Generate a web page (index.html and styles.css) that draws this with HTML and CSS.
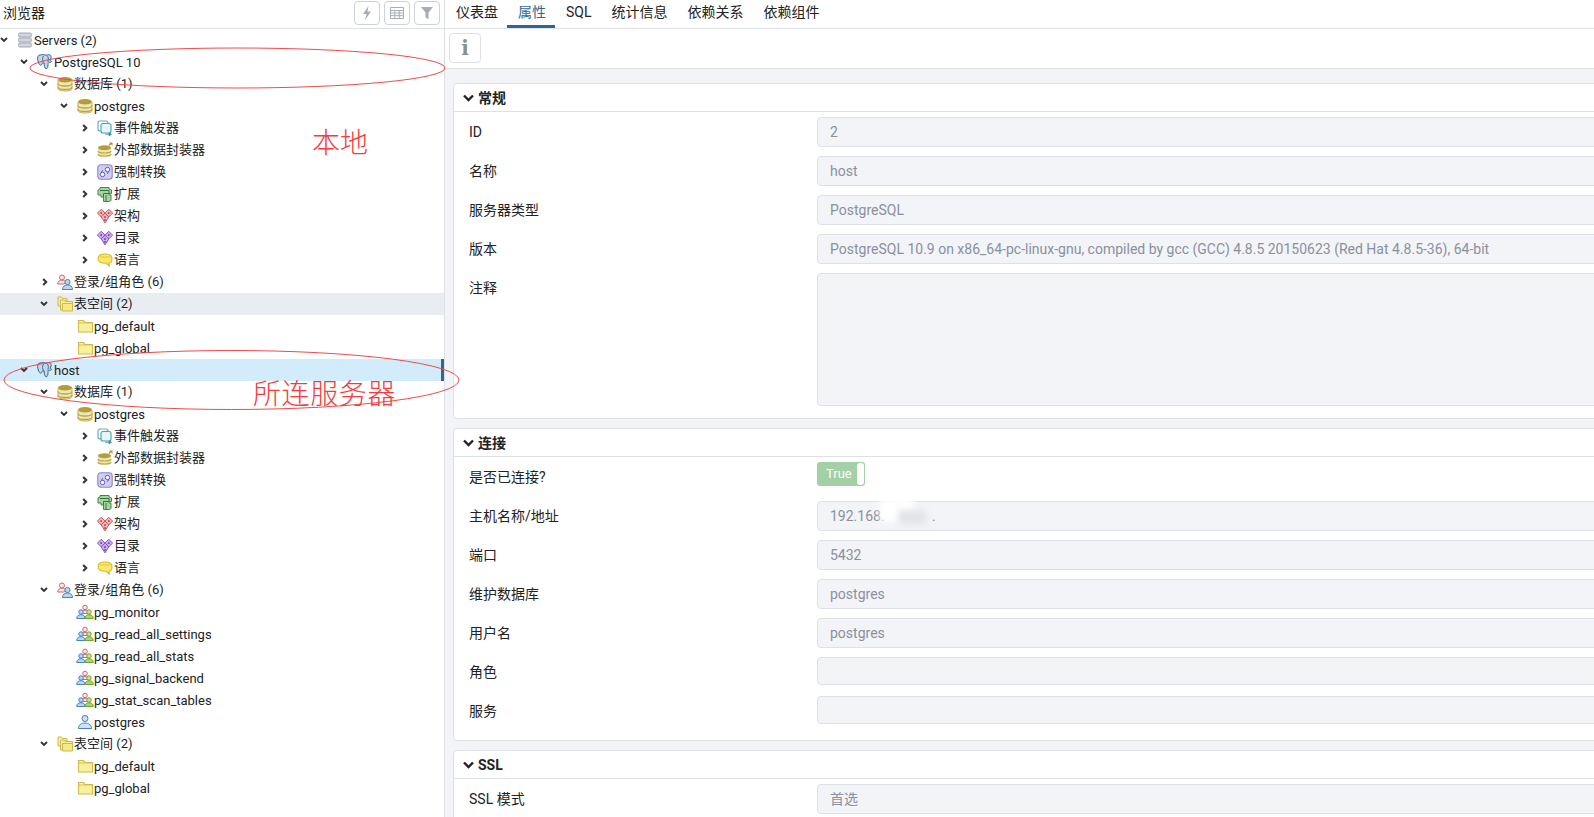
FILE: index.html
```html
<!DOCTYPE html>
<html lang="zh-CN">
<head>
<meta charset="UTF-8" />
<title>pgAdmin</title>
<link rel="stylesheet" href="styles.css">
</head>
<body>
<svg class="sprite" width="0" height="0" aria-hidden="true">
  <symbol id="down" viewBox="0 0 8 6"><path d="M1 1l3 3 3-3" fill="none" stroke="#333" stroke-width="1.900"/></symbol>
  <symbol id="right" viewBox="0 0 6 8"><path d="M1.200 1l3 3-3 3" fill="none" stroke="#333" stroke-width="2"/></symbol>
  <symbol id="fold" viewBox="0 0 11 8"><path d="M1 1.500l4.500 4.500 4.500-4.500" fill="none" stroke="#222" stroke-width="2.400"/></symbol>
  <symbol id="servers" viewBox="0 0 16 16">
    <g fill="#d3d6dc" stroke="#a3a8b2"><rect x="1.500" y="1" width="13" height="4" rx="1.500"/><rect x="1.500" y="6" width="13" height="4" rx="1.500"/><rect x="1.500" y="11" width="13" height="4" rx="1.500"/></g>
  </symbol>
  <symbol id="pg" viewBox="0 0 16 16">
    <path d="M3 1C.8 1 .2 3.800.8 6.200c.5 2.200 1.400 4.800 2.800 5 1.100.1 1.400-1.500 1.900-2.400.9.300 1.300.4 1.700.1-.1 2 .3 5.600 1.900 5.800 1.600.2 1.800-1.900 1.900-4.200.1-1.300.1-2 .5-2.400 1.300.5 2.700.3 3.100-.6.300-.6-.9-.6-1.500-1.100 1.100-1.700 1.400-4 .5-5C13 .4 10.700.5 9.400 1.300 7.800.6 5 .4 3 1z" fill="#c4d8ea" stroke="#336791"/>
    <path d="M6.500 2C5 4.200 5.500 7 6.500 8.500M9.600 1.500c2 1 2.100 3.800 1.300 6.200" fill="none" stroke="#336791" stroke-width=".9"/>
  </symbol>
  <symbol id="db" viewBox="0 0 16 16">
    <path d="M1 4v8.500C1 14 4 15 8 15s7-1 7-2.500V4z" fill="#efe7b0"/>
    <path d="M1 7.500C1 9 4 10 8 10s7-1 7-2.500M1 11c0 1.500 3 2.500 7 2.500s7-1 7-2.500" fill="none" stroke="#b9a44a" stroke-width="1.300"/>
    <path d="M1 4v8.500C1 14 4 15 8 15s7-1 7-2.500V4" fill="none" stroke="#c5b35c"/>
    <ellipse cx="8" cy="3.800" rx="7" ry="2.800" fill="#b49c3c"/>
  </symbol>
  <symbol id="trigger" viewBox="0 0 16 16">
    <rect x="1" y="1" width="10" height="10" rx="2" fill="#fff" stroke="#5ba9b8" stroke-width="1.100"/>
    <rect x="4" y="3.500" width="10" height="9.500" rx="2" fill="#e8f5f7" stroke="#4a9fb0" stroke-width="1.100"/>
    <path d="M8 14.300h5M12 12.800l2.500 1.500-2.500 1.500z" fill="#2f8ca0" stroke="#2f8ca0" stroke-width=".7"/>
  </symbol>
  <symbol id="fdw" viewBox="0 0 16 16">
    <path d="M1 6v7c0 1.200 3 2 6.500 2s6.500-.8 6.500-2V6z" fill="#efe7b0"/>
    <path d="M1 9c0 1.200 3 2 6.500 2S14 10.200 14 9M1 12c0 1.200 3 2 6.500 2s6.500-.8 6.500-2" fill="none" stroke="#b9a44a" stroke-width="1.200"/>
    <ellipse cx="7.500" cy="5.800" rx="6.500" ry="2.500" fill="#b49c3c"/>
    <path d="M12 3.500l2.500-2.500M12.500 1h2.500v2.500" fill="none" stroke="#a88f38" stroke-width="1.100"/>
  </symbol>
  <symbol id="cast" viewBox="0 0 16 16">
    <rect x=".8" y=".8" width="14.400" height="14.400" rx="3" fill="#cfcdf3" stroke="#8a87cf" stroke-width="1.100"/>
    <circle cx="10.500" cy="5.500" r="2.200" fill="#fff" stroke="#4d4aa5" stroke-width=".9"/>
    <circle cx="5.500" cy="10.500" r="2.200" fill="#fff" stroke="#4d4aa5" stroke-width=".9"/>
    <path d="M6 6.500c-1 .5-1.500 1-1.500 2M10 9.500c1-.5 1.500-1 1.500-2" fill="none" stroke="#4d4aa5"/>
  </symbol>
  <symbol id="ext" viewBox="0 0 16 16">
    <path d="M1 4l2-1V1.500h9V3l2.500 1v3.500H12V9h2v5.500l-2 1H6.500V11H4V9H1z" fill="#a9d3a5" stroke="#3f8a45"/>
    <path d="M3 4.500h9v3H6.500V11M9 9v6" fill="none" stroke="#2f7a38"/>
  </symbol>
  <symbol id="schema" viewBox="0 0 16 16">
    <g fill="#f0b8b8" stroke="#c4484f" stroke-width=".9"><path d="M4.200 1.300L8 5.100 4.200 8.900.4 5.100z"/><path d="M11.800 1.300l3.800 3.800-3.800 3.800L8 5.100z"/><path d="M8 5.100l3.800 3.800-3.800 6-3.800-6z"/></g>
    <g fill="#b8343c"><rect x="3.400" y="4.300" width="1.600" height="1.600"/><rect x="11" y="4.300" width="1.600" height="1.600"/><rect x="7.200" y="8.300" width="1.600" height="1.600"/><rect x="7.200" y="11.200" width="1.600" height="1.600"/></g>
  </symbol>
  <symbol id="catalog" viewBox="0 0 16 16">
    <g fill="#c9aef0" stroke="#7a47c0" stroke-width=".9"><path d="M4.200 1.300L8 5.100 4.200 8.900.4 5.100z"/><path d="M11.800 1.300l3.800 3.800-3.800 3.800L8 5.100z"/><path d="M8 5.100l3.800 3.800-3.800 6-3.800-6z"/></g>
    <g fill="#6a38b0"><rect x="3.400" y="4.300" width="1.600" height="1.600"/><rect x="11" y="4.300" width="1.600" height="1.600"/><rect x="7.200" y="8.300" width="1.600" height="1.600"/><rect x="7.200" y="11.200" width="1.600" height="1.600"/></g>
  </symbol>
  <symbol id="lang" viewBox="0 0 16 16">
    <path d="M8 2c4 0 7 1.300 7 4.500S13.500 11 12 11.200l.3 2.800-3.300-2.700C4 11.500 1 10 1 6.500S4 2 8 2z" fill="#fbe96a" stroke="#d9b92c" stroke-width="1.100"/>
    <path d="M3 5h10" stroke="#e3c53c"/>
  </symbol>
  <symbol id="login" viewBox="0 0 16 16">
    <circle cx="5" cy="3.500" r="2.500" fill="#fbe4e4" stroke="#d0686c"/><path d="M.7 10c0-2.500 1.800-3.800 4.300-3.800 2 0 3.500.8 4 2.300L7 10z" fill="#fbe4e4" stroke="#d0686c"/>
    <circle cx="10.500" cy="8" r="2.600" fill="#bcd6f0" stroke="#4a80bf"/><path d="M5.500 15.500c0-3 2-4.500 5-4.500s5 1.500 5 4.500z" fill="#bcd6f0" stroke="#4a80bf"/>
  </symbol>
  <symbol id="ts" viewBox="0 0 16 16">
    <path d="M1 1h3.500l1 1.500H10V5H5v5H1z" fill="#f8f0a0" stroke="#cdb84c"/>
    <path d="M3.500 4h3.500l1 1.500h7.500V14H3.500z" fill="#f8f0a0" stroke="#cdb84c"/>
    <path d="M5.500 7.500h10V15h-10z" fill="#f5ea88" stroke="#cdb84c"/>
  </symbol>
  <symbol id="folder" viewBox="0 0 16 16">
    <path d="M1.500 2.500h5l1.500 2h7.500v9.500H1.500z" fill="#f8f09a" stroke="#cfba50" stroke-width="1.100"/>
    <path d="M1.500 5h14" stroke="#cfba50" stroke-width=".8"/>
  </symbol>
  <symbol id="group" viewBox="0 0 18 16">
    <circle cx="9" cy="3.500" r="2.300" fill="#fbe4e4" stroke="#d0686c"/><path d="M5.500 9.500c0-2 1.500-3.200 3.500-3.200s3.500 1.200 3.500 3.200z" fill="#fbe4e4" stroke="#d0686c"/>
    <circle cx="5" cy="8" r="2.200" fill="#bcd6f0" stroke="#4a80bf"/><path d="M.7 14.500c0-2.500 1.800-3.800 4.300-3.800s4 1.300 4 3.800z" fill="#bcd6f0" stroke="#4a80bf"/>
    <circle cx="13" cy="8" r="2.200" fill="#c9e59a" stroke="#6ea62e"/><path d="M9 14.500c0-2.500 1.500-3.800 4-3.800s4.300 1.300 4.300 3.800z" fill="#a9d668" stroke="#6ea62e"/>
  </symbol>
  <symbol id="user" viewBox="0 0 16 16">
    <circle cx="8" cy="4.500" r="3" fill="#cfe2f5" stroke="#4a80bf"/><path d="M1.500 14.500c0-3.500 2.500-5.500 6.500-5.500s6.500 2 6.500 5.500z" fill="#cfe2f5" stroke="#4a80bf"/>
  </symbol>
</svg>

<div class="app">
  <aside class="browser">
    <header class="browser-head">
      <span class="browser-title">浏览器</span>
      <div class="tools">
        <button class="tool"><svg width="12" height="16" viewBox="0 0 12 16"><path d="M7.500 1L2 9h3.500L4 15l6-8.500H6.500z" fill="#a7adb8"/></svg></button>
        <button class="tool"><svg width="14" height="12" viewBox="0 0 14 12"><path d="M.5.500h13v11H.5zM.5 3.500h13M.5 6h13M.5 8.700h13M4.800 3.500v8M9.200 3.500v8" fill="none" stroke="#a7adb8"/></svg></button>
        <button class="tool"><svg width="14" height="14" viewBox="0 0 14 14"><path d="M1 1h12L8.500 6.500V13l-3-1.500v-5z" fill="#a7adb8"/></svg></button>
      </div>
    </header>
    <ul class="tree">
      <li class="node l0"><svg class="tog"><use href="#down"/></svg><svg class="ico"><use href="#servers"/></svg><span class="lat">Servers (2)</span></li>
      <li class="node l1"><svg class="tog"><use href="#down"/></svg><svg class="ico"><use href="#pg"/></svg><span class="lat">PostgreSQL 10</span></li>
      <li class="node l2"><svg class="tog"><use href="#down"/></svg><svg class="ico"><use href="#db"/></svg>数据库 (1)</li>
      <li class="node l3"><svg class="tog"><use href="#down"/></svg><svg class="ico"><use href="#db"/></svg><span class="lat">postgres</span></li>
      <li class="node l4"><svg class="tog shut"><use href="#right"/></svg><svg class="ico"><use href="#trigger"/></svg>事件触发器</li>
      <li class="node l4"><svg class="tog shut"><use href="#right"/></svg><svg class="ico"><use href="#fdw"/></svg>外部数据封装器</li>
      <li class="node l4"><svg class="tog shut"><use href="#right"/></svg><svg class="ico"><use href="#cast"/></svg>强制转换</li>
      <li class="node l4"><svg class="tog shut"><use href="#right"/></svg><svg class="ico"><use href="#ext"/></svg>扩展</li>
      <li class="node l4"><svg class="tog shut"><use href="#right"/></svg><svg class="ico"><use href="#schema"/></svg>架构</li>
      <li class="node l4"><svg class="tog shut"><use href="#right"/></svg><svg class="ico"><use href="#catalog"/></svg>目录</li>
      <li class="node l4"><svg class="tog shut"><use href="#right"/></svg><svg class="ico"><use href="#lang"/></svg>语言</li>
      <li class="node l2"><svg class="tog shut"><use href="#right"/></svg><svg class="ico"><use href="#login"/></svg>登录/组角色 (6)</li>
      <li class="node l2 hover"><svg class="tog"><use href="#down"/></svg><svg class="ico"><use href="#ts"/></svg>表空间 (2)</li>
      <li class="node l3"><span class="tog"></span><svg class="ico"><use href="#folder"/></svg><span class="lat">pg_default</span></li>
      <li class="node l3"><span class="tog"></span><svg class="ico"><use href="#folder"/></svg><span class="lat">pg_global</span></li>
      <li class="node l1 selected"><svg class="tog"><use href="#down"/></svg><svg class="ico"><use href="#pg"/></svg><span class="lat">host</span></li>
      <li class="node l2"><svg class="tog"><use href="#down"/></svg><svg class="ico"><use href="#db"/></svg>数据库 (1)</li>
      <li class="node l3"><svg class="tog"><use href="#down"/></svg><svg class="ico"><use href="#db"/></svg><span class="lat">postgres</span></li>
      <li class="node l4"><svg class="tog shut"><use href="#right"/></svg><svg class="ico"><use href="#trigger"/></svg>事件触发器</li>
      <li class="node l4"><svg class="tog shut"><use href="#right"/></svg><svg class="ico"><use href="#fdw"/></svg>外部数据封装器</li>
      <li class="node l4"><svg class="tog shut"><use href="#right"/></svg><svg class="ico"><use href="#cast"/></svg>强制转换</li>
      <li class="node l4"><svg class="tog shut"><use href="#right"/></svg><svg class="ico"><use href="#ext"/></svg>扩展</li>
      <li class="node l4"><svg class="tog shut"><use href="#right"/></svg><svg class="ico"><use href="#schema"/></svg>架构</li>
      <li class="node l4"><svg class="tog shut"><use href="#right"/></svg><svg class="ico"><use href="#catalog"/></svg>目录</li>
      <li class="node l4"><svg class="tog shut"><use href="#right"/></svg><svg class="ico"><use href="#lang"/></svg>语言</li>
      <li class="node l2"><svg class="tog"><use href="#down"/></svg><svg class="ico"><use href="#login"/></svg>登录/组角色 (6)</li>
      <li class="node l3"><span class="tog"></span><svg class="ico wide"><use href="#group"/></svg><span class="lat">pg_monitor</span></li>
      <li class="node l3"><span class="tog"></span><svg class="ico wide"><use href="#group"/></svg><span class="lat">pg_read_all_settings</span></li>
      <li class="node l3"><span class="tog"></span><svg class="ico wide"><use href="#group"/></svg><span class="lat">pg_read_all_stats</span></li>
      <li class="node l3"><span class="tog"></span><svg class="ico wide"><use href="#group"/></svg><span class="lat">pg_signal_backend</span></li>
      <li class="node l3"><span class="tog"></span><svg class="ico wide"><use href="#group"/></svg><span class="lat">pg_stat_scan_tables</span></li>
      <li class="node l3"><span class="tog"></span><svg class="ico"><use href="#user"/></svg><span class="lat">postgres</span></li>
      <li class="node l2"><svg class="tog"><use href="#down"/></svg><svg class="ico"><use href="#ts"/></svg>表空间 (2)</li>
      <li class="node l3"><span class="tog"></span><svg class="ico"><use href="#folder"/></svg><span class="lat">pg_default</span></li>
      <li class="node l3"><span class="tog"></span><svg class="ico"><use href="#folder"/></svg><span class="lat">pg_global</span></li>
    </ul>
  </aside>

  <main class="main">
    <nav class="tabs">
      <a class="tab">仪表盘</a>
      <a class="tab active">属性</a>
      <a class="tab">SQL</a>
      <a class="tab">统计信息</a>
      <a class="tab">依赖关系</a>
      <a class="tab">依赖组件</a>
    </nav>
    <div class="toolbar"><button class="info">i</button></div>
    <div class="content">
      <section class="card">
        <h3 class="card-head"><svg class="fold"><use href="#fold"/></svg>常规</h3>
        <div class="card-body">
          <div class="field"><label>ID</label><div class="value">2</div></div>
          <div class="field"><label>名称</label><div class="value">host</div></div>
          <div class="field"><label>服务器类型</label><div class="value">PostgreSQL</div></div>
          <div class="field"><label>版本</label><div class="value">PostgreSQL 10.9 on x86_64-pc-linux-gnu, compiled by gcc (GCC) 4.8.5 20150623 (Red Hat 4.8.5-36), 64-bit</div></div>
          <div class="field"><label>注释</label><div class="value memo"></div></div>
        </div>
      </section>
      <section class="card">
        <h3 class="card-head"><svg class="fold"><use href="#fold"/></svg>连接</h3>
        <div class="card-body long">
          <div class="field"><label>是否已连接?</label><div class="switch"><span class="switch-text">True</span><span class="switch-knob"></span></div></div>
          <div class="field"><label>主机名称/地址</label><div class="value">192.168.<span class="smudge"></span><span class="smudge-grey"></span><span class="smudge-dot">.</span></div></div>
          <div class="field"><label>端口</label><div class="value">5432</div></div>
          <div class="field"><label>维护数据库</label><div class="value">postgres</div></div>
          <div class="field"><label>用户名</label><div class="value">postgres</div></div>
          <div class="field"><label>角色</label><div class="value empty"></div></div>
          <div class="field"><label>服务</label><div class="value empty"></div></div>
        </div>
      </section>
      <section class="card">
        <h3 class="card-head"><svg class="fold"><use href="#fold"/></svg>SSL</h3>
        <div class="card-body">
          <div class="field"><label>SSL 模式</label><div class="value">首选</div></div>
        </div>
      </section>
    </div>
  </main>
</div>

<!-- red notes drawn on top of the screenshot -->
<svg class="marks" width="1594" height="817">
  <ellipse cx="237.500" cy="68" rx="207.500" ry="20"/>
  <ellipse cx="231.500" cy="380" rx="227.500" ry="29.500"/>
</svg>
<div class="note note-local">本地</div>
<div class="note note-remote">所连服务器</div>
</body>
</html>
```

FILE: styles.css
```css
* { box-sizing: border-box; }
html, body {
  margin: 0;
  height: 100%;
  overflow: hidden;
}
body {
  font-family: Roboto, "Noto Sans CJK SC", sans-serif;
  font-size: 13px;
  color: #222;
  background: #fff;
}
.sprite { position: absolute; }
.app {
  display: flex;
  height: 817px;
}

/* browser tree */
.browser {
  width: 445px;
  flex: none;
  border-right: 1px solid #dde0e6;
}
.browser-head {
  height: 29px;
  display: flex;
  align-items: center;
  justify-content: space-between;
  padding: 0 3px 3px 3px;
  border-bottom: 1px solid #dde0e6;
  font-size: 14px;
  line-height: 20px;
}
.tools {
  display: flex;
  gap: 4px;
  margin-right: 1px;
}
.tool {
  width: 26px;
  height: 24px;
  padding: 0;
  display: flex;
  align-items: center;
  justify-content: center;
  background: #fff;
  border: 1px solid #ccd1da;
  border-radius: 4px;
}
.tree {
  list-style: none;
  margin: 0;
  padding: 0;
}
.node {
  height: 22px;
  display: flex;
  align-items: center;
  line-height: 22px;
  white-space: nowrap;
}
/* latin labels sit a pixel lower than the CJK ones */
.lat { margin-top: 2px; }
.l1 { padding-left: 20px; }
.l2 { padding-left: 40px; }
.l3 { padding-left: 60px; }
.l4 { padding-left: 80px; }
.hover { background: #e9ecf1; }
.selected {
  background: #d2ecfb;
  border-right: 3px solid #326690;
}
.tog {
  width: 8px;
  height: 6px;
  margin-right: 8px;
  flex: none;
}
.tog.shut {
  width: 6px;
  height: 8px;
  margin-left: 2px;
}
.ico {
  width: 16px;
  height: 16px;
  margin: 0 1px;
  flex: none;
}
.ico.wide {
  width: 18px;
  margin: 0;
}

/* right side */
.main {
  flex: 1;
  min-width: 0;
  display: flex;
  flex-direction: column;
}
.tabs {
  height: 29px;
  flex: none;
  display: flex;
  border-bottom: 1px solid #dde0e6;
}
.tab {
  height: 28px;
  padding: 0 9px 0 11px;
  font-size: 14px;
  line-height: 24px;
}
.tab.active {
  color: #326690;
  border-bottom: 3px solid #326690;
}
.toolbar {
  height: 40px;
  flex: none;
  padding: 4px;
  border-bottom: 1px solid #dde0e6;
}
.info {
  width: 32px;
  height: 30px;
  padding: 0;
  background: #fff;
  border: 1px solid #dde0e6;
  border-radius: 4px;
  font: bold 20px "DejaVu Serif", serif;
  color: #8f8f8f;
}
.content {
  flex: 1;
  overflow: hidden;
  padding: 14px 0 0 8px;
  background: #f3f4f8;
  display: flex;
  flex-direction: column;
  gap: 9px;
}
.card {
  flex: none;
  margin-right: -20px;
  background: #fff;
  border: 1px solid #dde0e6;
  border-radius: 4px;
}
.card-head {
  height: 28px;
  margin: 0;
  padding-left: 9px;
  display: flex;
  align-items: center;
  font-size: 14px;
  line-height: 26px;
  font-weight: bold;
  border-bottom: 1px solid #dde0e6;
}
.fold {
  width: 11px;
  height: 8px;
  margin-right: 4px;
  margin-top: 1px;
  flex: none;
}
.card-body { padding: 5px 0 3px 15px; font-size: 14px; }
.card-body.long { padding-bottom: 5px; }
.field {
  display: flex;
  align-items: flex-start;
  margin-bottom: 9px;
  line-height: 30px;
}
.field label { width: 348px; flex: none; }
.value {
  position: relative;
  flex: 1;
  height: 30px;
  padding: 0 12px;
  background: #f3f4f8;
  border: 1px solid #dde0e6;
  border-radius: 4px;
  line-height: 28px;
  color: #8a909e;
}
.value.memo { height: 133px; }
.value.empty { height: 28px; }
.smudge {
  position: absolute;
  left: 62px;
  top: -4px;
  width: 34px;
  height: 24px;
  background: #fff;
  filter: blur(3px);
}
.smudge-grey {
  position: absolute;
  left: 80px;
  top: 8px;
  width: 28px;
  height: 15px;
  background: #e3e4e8;
  filter: blur(3px);
}
.smudge-dot {
  position: absolute;
  left: 114px;
  top: 0;
}
.switch {
  width: 48px;
  height: 24px;
  display: flex;
  align-items: center;
  justify-content: space-between;
  padding: 0 1px 0 9px;
  background: #a3d0a5;
  border-radius: 3px;
  color: #fff;
  font-size: 13px;
  line-height: 22px;
}
.switch-knob {
  width: 7px;
  height: 22px;
  background: #fff;
  border-radius: 3px;
}

/* annotations */
.marks {
  position: absolute;
  left: 0;
  top: 0;
  pointer-events: none;
}
.marks ellipse {
  fill: none;
  stroke: #f24a4a;
  stroke-width: 1;
}
.note {
  position: absolute;
  font-family: "Noto Sans CJK SC", sans-serif;
  font-weight: 300;
  font-size: 28px;
  line-height: 34px;
  color: #f43c3c;
  white-space: nowrap;
}
.note-local { left: 312px; top: 124px; }
.note-remote { left: 253px; top: 375px; letter-spacing: .6px; }
```
